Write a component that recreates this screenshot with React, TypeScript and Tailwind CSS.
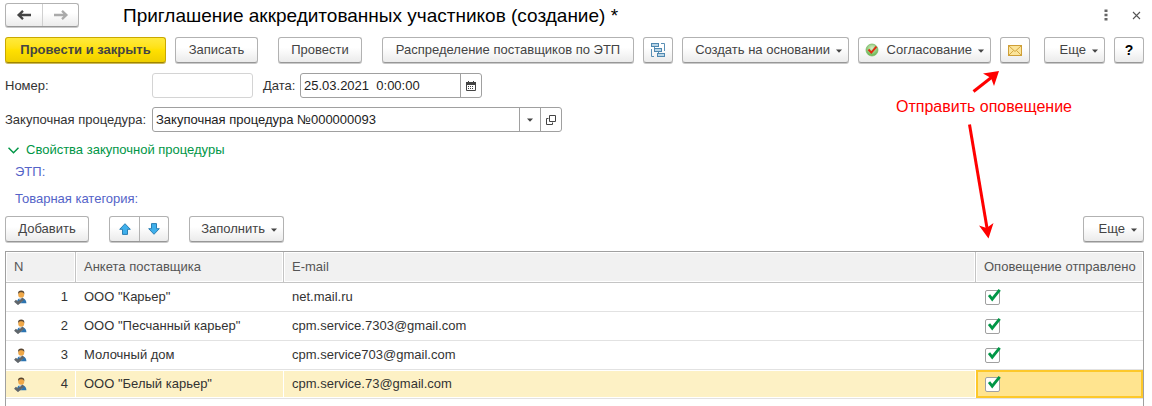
import React, { useState } from 'react';

type Row = { id: number; name: string; email: string; sent: boolean };

const initialRows: Row[] = [
  { id: 1, name: 'ООО "Карьер"', email: 'net.mail.ru', sent: true },
  { id: 2, name: 'ООО "Песчанный карьер"', email: 'cpm.service.7303@gmail.com', sent: true },
  { id: 3, name: 'Молочный дом', email: 'cpm.service703@gmail.com', sent: true },
  { id: 4, name: 'ООО "Белый карьер"', email: 'cpm.service.73@gmail.com', sent: true },
];

const raised =
  'border border-[#b2b2b2] border-b-[#979797] bg-linear-to-b from-white from-40% to-[#ebebeb] shadow-[0_1px_0_#c9c9c9]';

type ButtonProps = {
  children: React.ReactNode;
  className?: string;
  label?: string;
  menu?: boolean;
};

function Button({ children, className = '', label, menu }: ButtonProps) {
  return (
    <button
      type="button"
      aria-label={label}
      aria-haspopup={menu ? 'menu' : undefined}
      className={`flex h-[26px] shrink-0 items-center rounded-[3px] whitespace-nowrap text-[#444] ${
        menu ? 'justify-end pr-1.5' : 'justify-center'
      } ${raised} ${className}`}
    >
      {children}
      {menu && <Caret className="mt-0.5 ml-1.5" />}
    </button>
  );
}

function Caret({ className = '' }: { className?: string }) {
  return (
    <svg width="6" height="4" viewBox="0 0 6 4" className={`shrink-0 ${className}`} aria-hidden="true">
      <path d="M0 0.500h6L3 3.700z" fill="#444" />
    </svg>
  );
}

function NavArrow({ color, flip }: { color: string; flip?: boolean }) {
  return (
    <svg width="16" height="12" viewBox="0 0 16 12" className={flip ? 'rotate-180' : ''} aria-hidden="true">
      <path d="M15 6H3M7 1.800L2.600 6 7 10.200" fill="none" stroke={color} strokeWidth="2.300" />
    </svg>
  );
}

function StructureIcon() {
  return (
    <svg width="16" height="16" viewBox="0 0 16 16" className="shrink-0" aria-hidden="true">
      <g fill="none" stroke="#5a8fb5" strokeWidth="1">
        <path d="M11 1.500h3.500V9M4 14.500H1.500V7" />
        <path d="M4.500 4.500v4h1M8.500 9.500v4" />
      </g>
      <g fill="#b9d5e6" stroke="#4f88b0" strokeWidth="1">
        <rect x="1.500" y="1.500" width="7" height="3" />
        <rect x="4.500" y="6.500" width="7" height="3" />
        <rect x="7.500" y="11.500" width="7" height="3" />
      </g>
    </svg>
  );
}

function ApproveIcon() {
  return (
    <svg width="14" height="14" viewBox="0 0 14 14" className="mr-2 shrink-0" aria-hidden="true">
      <defs>
        <radialGradient id="approve" cx="0.5" cy="0.35" r="0.65">
          <stop offset="0" stopColor="#d9f0c8" />
          <stop offset="1" stopColor="#63b44c" />
        </radialGradient>
      </defs>
      <circle cx="7" cy="7" r="6" fill="url(#approve)" stroke="#7fba6b" strokeWidth="0.8" />
      <path d="M3.500 6.500L6.300 9.600 11.400 3.600" fill="none" stroke="#e02a10" strokeWidth="2" />
    </svg>
  );
}

function MailIcon() {
  return (
    <svg width="14" height="11" viewBox="0 0 14 11" className="shrink-0" aria-hidden="true">
      <rect x="0.500" y="0.500" width="13" height="10" fill="#fbe49a" stroke="#cf9f37" />
      <path d="M1 1l6 5.500L13 1M1 10l4.500-4.500M13 10L8.500 5.500" fill="none" stroke="#cf9f37" strokeWidth="0.9" />
    </svg>
  );
}

function BlueArrow({ down }: { down?: boolean }) {
  return (
    <svg width="12" height="12" viewBox="0 0 12 12" className={down ? 'rotate-180' : ''} aria-hidden="true">
      <path
        d="M6 0.700L11.300 6.300H8.500V11.400H3.500V6.300H0.700z"
        fill="#3fb0ec"
        stroke="#2b7fb3"
        strokeWidth="1"
        strokeLinejoin="round"
      />
    </svg>
  );
}

function CalendarIcon() {
  return (
    <svg width="10" height="10" viewBox="0 0 10 10" aria-hidden="true">
      <path d="M0.500 2h9v7.500h-9z" fill="#fff" stroke="#444" />
      <path d="M0 1h10v3H0zM2 0h1v2H2zM7 0h1v2H7z" fill="#444" />
      <path d="M2 5.500h6M2 7.500h6" stroke="#444" strokeDasharray="1 1" />
    </svg>
  );
}

function OpenIcon() {
  return (
    <svg width="10" height="10" viewBox="0 0 10 10" aria-hidden="true">
      <path d="M3.500 0.500h6v6h-6zM2.500 3.500h-2v6h6v-2" fill="none" stroke="#444" />
    </svg>
  );
}

function PersonIcon() {
  return (
    <svg width="13" height="15" viewBox="0 0 13 15" className="block" aria-hidden="true">
      <path d="M3 13.200c0-3.700 1.500-5.200 4.200-5.200s5 1.500 5.200 5.200z" fill="#2c74b0" />
      <path d="M4.800 8.200L7.500 12.500 9.600 8.200z" fill="#f2f6fa" />
      <circle cx="7.200" cy="4.800" r="3" fill="#f0a848" />
      <path
        d="M4.100 4.500C3.700 1.600 5.200 0.600 7.200 0.600s3.500 1 3.100 3.900C9.700 2.700 8.700 2.300 7.200 2.300S4.700 2.700 4.100 4.500z"
        fill="#5a4630"
      />
      <path d="M1 10.700l3 2.600L9.500 8.500" fill="none" stroke="#60666b" strokeWidth="2.800" />
    </svg>
  );
}

function CheckCell({ row, onToggle }: { row: Row; onToggle: () => void }) {
  return (
    <span className="relative block size-[15px]">
      <input
        type="checkbox"
        checked={row.sent}
        onChange={onToggle}
        aria-label={`Оповещение отправлено: ${row.name}`}
        className="peer block size-[15px] appearance-none rounded-[2px] border border-[#a0a0a0] bg-white"
      />
      <svg
        width="17"
        height="17"
        viewBox="0 0 17 17"
        className="pointer-events-none invisible absolute -top-0.5 left-0 peer-checked:visible"
        aria-hidden="true"
      >
        <path d="M4 7.200L7.200 11.200 14.700 1.800" fill="none" stroke="#009646" strokeWidth="2.800" />
      </svg>
    </span>
  );
}

const head =
  'h-[31px] border-r border-b border-[#c4c4c4] bg-[#f1f1f1] px-2 text-left font-normal text-[#555] shadow-[inset_0_0_0_1px_#fff] last:border-r-0';

export default function App() {
  const [rows, setRows] = useState(initialRows);
  const [open, setOpen] = useState(true);
  const selected = 4;

  const toggle = (id: number) =>
    setRows(rows.map((r) => (r.id === id ? { ...r, sent: !r.sent } : r)));

  return (
    <div className="relative flex min-h-screen flex-col bg-white pr-2 pl-[5px] font-['Liberation_Sans',Arial,sans-serif] text-[13px] leading-4 text-[#333]">
      <header className="flex h-[37px] items-start">
        <div className={`mt-[3px] flex h-6 overflow-hidden rounded-[3px] ${raised}`}>
          <button type="button" aria-label="Назад" className="flex w-9 items-center justify-center">
            <NavArrow color="#444" />
          </button>
          <button
            type="button"
            aria-label="Вперед"
            className="flex w-9 items-center justify-center border-l border-[#d0d0d0]"
          >
            <NavArrow color="#aaa" flip />
          </button>
        </div>
        <h1 className="mt-1 ml-11 text-[19px] leading-6 whitespace-nowrap text-black">
          Приглашение аккредитованных участников (создание) *
        </h1>
        <div className="mt-2 ml-auto flex items-center gap-6 pr-[3px]">
          <button type="button" aria-label="Меню формы" className="flex h-3.5 items-center">
            <svg width="4" height="12" viewBox="0 0 4 12" aria-hidden="true">
              <path d="M0.500 0.500h3v2.500h-3zM0.500 4.700h3v2.500h-3zM0.500 9h3v2.500h-3z" fill="#666" />
            </svg>
          </button>
          <button type="button" aria-label="Закрыть" className="flex h-3.5 items-center">
            <svg width="9" height="9" viewBox="0 0 9 9" aria-hidden="true">
              <path d="M1 1l7 7M8 1L1 8" stroke="#555" strokeWidth="1.100" />
            </svg>
          </button>
        </div>
      </header>

      <div className="flex gap-[9px]">
        <button
          type="button"
          className="h-[26px] w-[161px] shrink-0 rounded-[3px] border border-[#c9a800] border-b-[#a08600] bg-linear-to-b from-[#ffea3a] via-[#ffe000] to-[#efcf00] font-bold whitespace-nowrap text-[#444] shadow-[0_1px_0_#c9b860]"
        >
          Провести и закрыть
        </button>
        <Button className="w-[83px]">Записать</Button>
        <Button className="ml-[11px] w-[84px]">Провести</Button>
        <Button className="ml-[11px] w-[252px]">Распределение поставщиков по ЭТП</Button>
        <Button className="w-[30px]" label="Структура подчиненности">
          <StructureIcon />
        </Button>
        <Button className="w-[167px]" menu>
          Создать на основании
        </Button>
        <Button className="w-[133px]" menu>
          <ApproveIcon />
          Согласование
        </Button>
        <Button className="w-[30px]" label="Отправить оповещение">
          <MailIcon />
        </Button>
        <div className="ml-auto flex gap-[9px]">
          <Button className="w-[61px]" menu>
            Еще
          </Button>
          <Button className="w-[30px] text-[14px] font-bold text-black" label="Справка">
            ?
          </Button>
        </div>
      </div>

      <div className="mt-2.5 flex items-center">
        <label htmlFor="number" className="w-[147px]">
          Номер:
        </label>
        <input id="number" className="h-[25px] w-[101px] rounded-[3px] border border-[#d4d4d4] px-1" />
        <label htmlFor="date" className="ml-2.5 w-[37px]">
          Дата:
        </label>
        <div className="flex h-[25px] w-[182px] overflow-hidden rounded-[3px] border border-[#a0a0a0]">
          <input id="date" defaultValue="25.03.2021  0:00:00" className="min-w-0 flex-1 px-[3px] text-[#222]" />
          <button
            type="button"
            aria-label="Выбрать дату"
            className="flex w-[21px] items-center justify-center border-l border-[#a0a0a0]"
          >
            <CalendarIcon />
          </button>
        </div>
      </div>

      <div className="mt-[9px] flex items-center">
        <label htmlFor="procedure" className="w-[147px] whitespace-nowrap">
          Закупочная процедура:
        </label>
        <div className="flex h-[25px] w-[410px] overflow-hidden rounded-[3px] border border-[#a0a0a0]">
          <input
            id="procedure"
            defaultValue="Закупочная процедура №000000093"
            className="min-w-0 flex-1 px-[3px] text-[#222]"
          />
          <button
            type="button"
            aria-label="Выбрать из списка"
            className="flex w-[21px] items-center justify-center border-l border-[#a0a0a0]"
          >
            <Caret />
          </button>
          <button
            type="button"
            aria-label="Открыть"
            className="flex w-[21px] items-center justify-center border-l border-[#a0a0a0]"
          >
            <OpenIcon />
          </button>
        </div>
      </div>

      <section className="mt-2.5">
        <button
          type="button"
          aria-expanded={open}
          onClick={() => setOpen(!open)}
          className="flex items-center gap-[7px] pl-[3px] text-[#009646]"
        >
          <svg width="11" height="7" viewBox="0 0 11 7" aria-hidden="true">
            <path d="M0.500 0.700L5.500 5.700 10.500 0.700" fill="none" stroke="#009646" strokeWidth="1.500" />
          </svg>
          Свойства закупочной процедуры
        </button>
        {open && (
          <div className="mt-1.5 ml-2.5 flex flex-col gap-[11px] text-[#5463c8]">
            <p>ЭТП:</p>
            <p>Товарная категория:</p>
          </div>
        )}
      </section>

      <div className="mt-[9px] flex">
        <Button className="w-[84px]">Добавить</Button>
        <div className={`ml-5 flex h-[26px] overflow-hidden rounded-[3px] ${raised}`}>
          <button type="button" aria-label="Переместить вверх" className="flex w-[29px] items-center justify-center">
            <BlueArrow />
          </button>
          <button
            type="button"
            aria-label="Переместить вниз"
            className="flex w-[29px] items-center justify-center border-l border-[#b2b2b2]"
          >
            <BlueArrow down />
          </button>
        </div>
        <Button className="ml-5 w-[95px]" menu>
          Заполнить
        </Button>
        <Button className="ml-auto w-[61px]" menu>
          Еще
        </Button>
      </div>

      <div className="mt-[9px] flex-1 border border-b-0 border-[#a0a0a0]">
        <table className="w-full table-fixed border-separate border-spacing-0">
          <colgroup>
            <col className="w-[70px]" />
            <col className="w-[208px]" />
            <col />
            <col className="w-[167px]" />
          </colgroup>
          <thead>
            <tr>
              <th className={head}>N</th>
              <th className={head}>Анкета поставщика</th>
              <th className={head}>E-mail</th>
              <th className={`${head} whitespace-nowrap`}>Оповещение отправлено</th>
            </tr>
          </thead>
          <tbody>
            {rows.map((row) => {
              const active = row.id === selected;
              const cell = active
                ? 'h-[29px] border-b border-[#e2e2e2] bg-[#fdf1c5] px-2 shadow-[inset_0_1px_0_#fff,inset_0_-1px_0_#fff,inset_-1px_0_0_#fff]'
                : 'h-[29px] border-b border-[#e2e2e2] px-2';
              return (
                <tr key={row.id} aria-selected={active}>
                  <td className={cell}>
                    <span className="flex items-center justify-between">
                      <PersonIcon />
                      <span>{row.id}</span>
                    </span>
                  </td>
                  <td className={cell}>{row.name}</td>
                  <td className={cell}>{row.email}</td>
                  <td
                    className={
                      active
                        ? 'h-[29px] border-b border-[#e2e2e2] bg-[#ffe48f] px-[9px] shadow-[inset_0_0_0_2px_#fdc82a]'
                        : 'h-[29px] border-b border-[#e2e2e2] px-[9px]'
                    }
                  >
                    <CheckCell row={row} onToggle={() => toggle(row.id)} />
                  </td>
                </tr>
              );
            })}
          </tbody>
        </table>
      </div>

      <p className="pointer-events-none absolute top-[97px] left-[896px] text-[16px] leading-5 whitespace-nowrap text-[#ff0000]">
        Отправить оповещение
      </p>
      <svg
        width="60"
        height="172"
        viewBox="0 0 60 172"
        className="pointer-events-none absolute top-[68px] left-[950px]"
        aria-hidden="true"
      >
        <g fill="none" stroke="#ff0000">
          <path d="M23.500 23.500L42 9" strokeWidth="3" />
          <path d="M19.500 56.500L37 160" strokeWidth="3" />
        </g>
        <path d="M49 3L44 18 41 10 33 5.500z" fill="#ff0000" />
        <path d="M38.500 170.500L29 157.500 36.500 160 43.500 155z" fill="#ff0000" />
      </svg>
    </div>
  );
}
